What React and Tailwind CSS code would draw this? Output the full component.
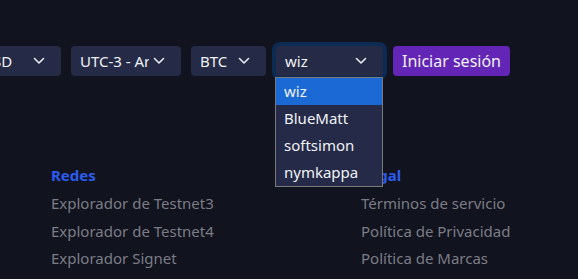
const font = { fontFamily: '"Noto Sans", "Open Sans", sans-serif' };

function Chevron() {
  return (
    <svg width="12" height="8" viewBox="0 0 12 8" fill="none" className="shrink-0">
      <path d="M1.5 1.5L6 6l4.5-4.5" stroke="#e8e9ee" strokeWidth="1.6" strokeLinecap="round" strokeLinejoin="round" />
    </svg>
  );
}

function Select({ label, className, focused }) {
  return (
    <div
      className={`flex h-[30px] shrink-0 items-center rounded-[4px] bg-[#252b46] pl-[9px] pr-[16px] text-[15px] text-[#f1f2f6] ${
        focused ? "shadow-[0_0_0_4px_#0d2a52]" : ""
      } ${className}`}
    >
      <span className="mr-[4px] min-w-0 flex-1 overflow-hidden whitespace-nowrap">{label}</span>
      <Chevron />
    </div>
  );
}

const options = ["wiz", "BlueMatt", "softsimon", "nymkappa"];

export default function App() {
  return (
    <div className="relative h-[279px] w-[578px] overflow-hidden bg-[#11131f]" style={font}>
      {/* selects */}
      <div className="flex justify-end gap-[10px] pr-[68px] pt-[46px]">
        <Select label="USD" className="w-[88px]" />
        <Select label="UTC-3 - Argentina" className="w-[110px]" />
        <Select label="BTC" className="w-[75px]" />
        <div className="relative shrink-0">
          <Select label="wiz" className="w-[107px]" focused />
          <div className="absolute left-[-1px] top-[31px] z-10 w-[108px] border border-[#7a7a7a] bg-[#242a47] text-[15px] text-[#f1f2f6]">
            {options.map((o, i) => (
              <div
                key={o}
                className={`flex h-[27px] items-center pl-[8px] ${i === 0 ? "bg-[#1b69d4]" : ""}`}
              >
                {o}
              </div>
            ))}
          </div>
        </div>
        <button className="h-[30px] w-[117px] shrink-0 whitespace-nowrap rounded-[4px] bg-[#6225b5] text-[16px] text-[#f1f2f6]">
          Iniciar sesión
        </button>
      </div>

      {/* footer */}
      <div className="mt-[84px] grid grid-cols-[310px_1fr] pl-[51px] text-[15px]">
        <div className="flex flex-col">
          <div className="h-[30px] font-bold leading-[30px] text-[#2b5cf0]">Redes</div>
          <div className="h-[27.5px] leading-[27.5px] text-[#7b7d86]">Explorador de Testnet3</div>
          <div className="h-[27.5px] leading-[27.5px] text-[#7b7d86]">Explorador de Testnet4</div>
          <div className="h-[27.5px] leading-[27.5px] text-[#7b7d86]">Explorador Signet</div>
        </div>
        <div className="flex flex-col">
          <div className="h-[30px] font-bold leading-[30px] text-[#2b5cf0]">Legal</div>
          <div className="h-[27.5px] leading-[27.5px] text-[#7b7d86]">Términos de servicio</div>
          <div className="h-[27.5px] leading-[27.5px] text-[#7b7d86]">Política de Privacidad</div>
          <div className="h-[27.5px] leading-[27.5px] text-[#7b7d86]">Política de Marcas</div>
        </div>
      </div>
    </div>
  );
}
